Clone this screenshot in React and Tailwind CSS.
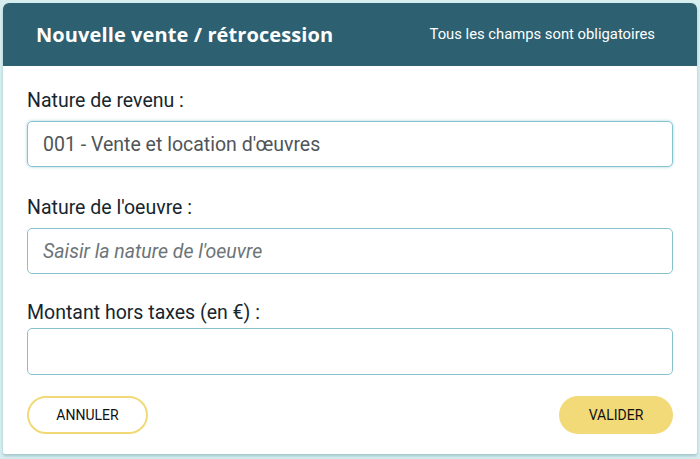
import React from 'react';

const App = () => {
  return (
    <div className="min-h-screen w-full bg-[#d7eef0] p-[3px] font-['Roboto',sans-serif]">
      <div className="bg-white rounded-t-[6px] rounded-b-[2px] h-[451px] shadow-[0_2px_3px_rgba(60,120,130,0.35)] overflow-hidden">
        {/* Header */}
        <div className="h-[63px] bg-[#2d6172] flex items-center justify-between pl-[33px] pr-[42px]">
          <h1 className="text-white text-[20px] font-bold font-['Open_Sans',sans-serif] tracking-[0.1px]">
            Nouvelle vente / rétrocession
          </h1>
          <span className="text-white text-[14.8px]">Tous les champs sont obligatoires</span>
        </div>

        {/* Form */}
        <div className="px-[24px] pt-[23px]">
          <label className="block text-[19.5px] text-[#17262e] leading-[24px] mb-[8px]">Nature de revenu :</label>
          <input
            type="text"
            defaultValue="001 - Vente et location d'œuvres"
            className="w-full h-[46px] rounded-[5px] border border-[#86c2cd] px-[15px] text-[19.5px] text-[#4f5558] outline-none shadow-[0_0_3px_rgba(110,190,205,0.7)]"
          />

          <label className="block text-[19.5px] text-[#17262e] leading-[24px] mt-[29px] mb-[8px]">Nature de l'oeuvre :</label>
          <input
            type="text"
            placeholder="Saisir la nature de l'oeuvre"
            className="w-full h-[46px] rounded-[5px] border border-[#86c2cd] px-[15px] text-[19.5px] text-[#4f5558] placeholder:italic placeholder:text-[#6c7478] outline-none"
          />

          <label className="block text-[19.5px] text-[#17262e] leading-[24px] mt-[27px] mb-[3px]">Montant hors taxes (en €) :</label>
          <input
            type="text"
            className="w-full h-[47px] rounded-[5px] border border-[#86c2cd] px-[15px] text-[19.5px] text-[#4f5558] outline-none"
          />

          <div className="flex justify-between items-center mt-[21px]">
            <button className="w-[121px] h-[38px] rounded-full border-2 border-[#f2d977] bg-white text-[14px] text-[#111]">
              ANNULER
            </button>
            <button className="w-[114px] h-[38px] rounded-full bg-[#f2da78] text-[14px] text-[#111]">
              VALIDER
            </button>
          </div>
        </div>
      </div>
    </div>
  );
};

export default App;
